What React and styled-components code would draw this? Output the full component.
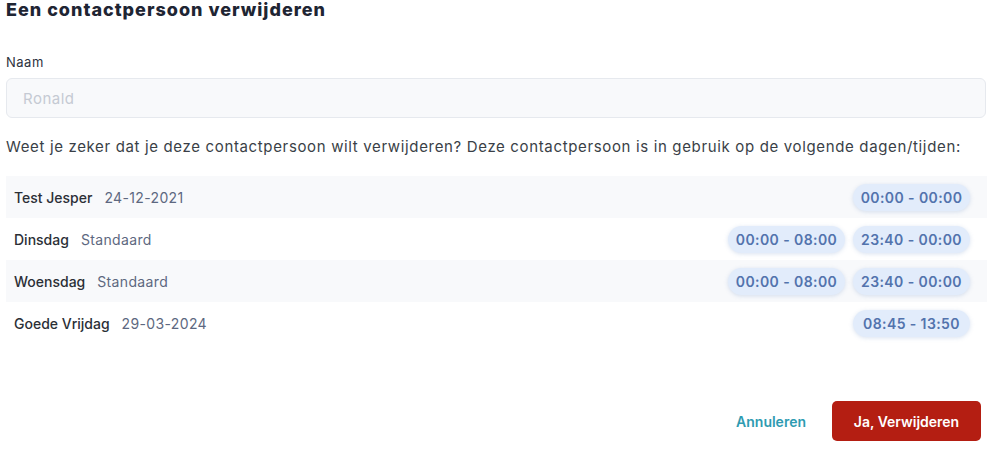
import React from "react";
import styled, { createGlobalStyle } from "styled-components";

const GlobalStyle = createGlobalStyle`
  html, body {
    margin: 0;
    padding: 0;
    background: #fff;
  }
  body {
    font-family: Inter, "Noto Sans", sans-serif;
    -webkit-font-smoothing: antialiased;
  }
`;

const usages = [
  { name: "Test Jesper", sub: "24-12-2021", times: ["00:00 - 00:00"] },
  { name: "Dinsdag", sub: "Standaard", times: ["00:00 - 08:00", "23:40 - 00:00"] },
  { name: "Woensdag", sub: "Standaard", times: ["00:00 - 08:00", "23:40 - 00:00"] },
  { name: "Goede Vrijdag", sub: "29-03-2024", times: ["08:45 - 13:50"] },
];

export default function App() {
  return (
    <>
      <GlobalStyle />
      <Dialog>
        <Title>Een contactpersoon verwijderen</Title>
        <Field>
          <Label>Naam</Label>
          <Input placeholder="Ronald" disabled />
        </Field>
        <Message>
          Weet je zeker dat je deze contactpersoon wilt verwijderen? Deze
          contactpersoon is in gebruik op de volgende dagen/tijden:
        </Message>
        <UsageList>
          {usages.map((u, idx) => (
            <UsageRow key={idx} $striped={idx % 2 === 0}>
              <RowName>{u.name}</RowName>
              <RowSub>{u.sub}</RowSub>
              <Times>
                {u.times.map((t) => (
                  <TimePill key={t}>{t}</TimePill>
                ))}
              </Times>
            </UsageRow>
          ))}
        </UsageList>
        <Footer>
          <CancelButton>Annuleren</CancelButton>
          <DeleteButton>Ja, Verwijderen</DeleteButton>
        </Footer>
      </Dialog>
    </>
  );
}

const Dialog = styled.div`
  width: 1000px;
  height: 461px;
  box-sizing: border-box;
  padding: 0 13px 0 6px;
  display: flex;
  flex-direction: column;
  overflow: hidden;
`;

const Title = styled.h2`
  margin: 0;
  font-size: 18px;
  line-height: 19px;
  letter-spacing: 1px;
  font-weight: 800;
  color: #1e2533;
`;

const Field = styled.div`
  margin-top: 35px;
  display: flex;
  flex-direction: column;
  gap: 8px;
  padding-right: 1px;
`;

const Label = styled.label`
  font-size: 13px;
  line-height: 16px;
  letter-spacing: 0.5px;
  color: #2d3340;
`;

const Input = styled.input`
  height: 40px;
  box-sizing: border-box;
  border: 1px solid #e6e9ee;
  border-radius: 6px;
  background: #f8f9fb;
  padding: 0 16px;
  font-family: inherit;
  font-size: 15px;
  letter-spacing: 0.5px;
  color: #333;

  &::placeholder {
    color: #c5cad3;
  }
`;

const Message = styled.p`
  margin: 20px 0 0;
  font-size: 15px;
  line-height: 18px;
  letter-spacing: 0.65px;
  color: #3a3f47;
`;

const UsageList = styled.div`
  margin-top: 20px;
  display: flex;
  flex-direction: column;
`;

const UsageRow = styled.div`
  height: 42px;
  display: flex;
  align-items: center;
  padding: 0 17px 0 8px;
  background: ${(p) => (p.$striped ? "#f8f9fb" : "#fff")};
`;

const RowName = styled.span`
  font-size: 14px;
  font-weight: 500;
  color: #2b2f36;
`;

const RowSub = styled.span`
  margin-left: 12px;
  font-size: 14px;
  letter-spacing: 0.35px;
  color: #5d6880;
`;

const Times = styled.div`
  margin-left: auto;
  display: flex;
  gap: 8px;
`;

const TimePill = styled.span`
  display: inline-flex;
  align-items: center;
  justify-content: center;
  height: 27px;
  width: 117px;
  border-radius: 14px;
  background: #e2ecfb;
  box-shadow: 0 1px 4px rgba(120, 150, 200, 0.28);
  font-size: 14px;
  letter-spacing: 0.4px;
  font-weight: 600;
  color: #5273ad;
`;

const Footer = styled.div`
  margin-top: auto;
  margin-bottom: 20px;
  margin-right: 6px;
  display: flex;
  justify-content: flex-end;
  align-items: center;
  gap: 26px;
`;

const CancelButton = styled.button`
  border: none;
  background: none;
  padding: 0;
  font-family: inherit;
  font-size: 14px;
  font-weight: 600;
  color: #2e9bb1;
  cursor: pointer;
`;

const DeleteButton = styled.button`
  width: 149px;
  height: 40px;
  border: none;
  border-radius: 5px;
  background: #b41e12;
  color: #fff;
  font-family: inherit;
  font-size: 14px;
  font-weight: 600;
  cursor: pointer;
`;
